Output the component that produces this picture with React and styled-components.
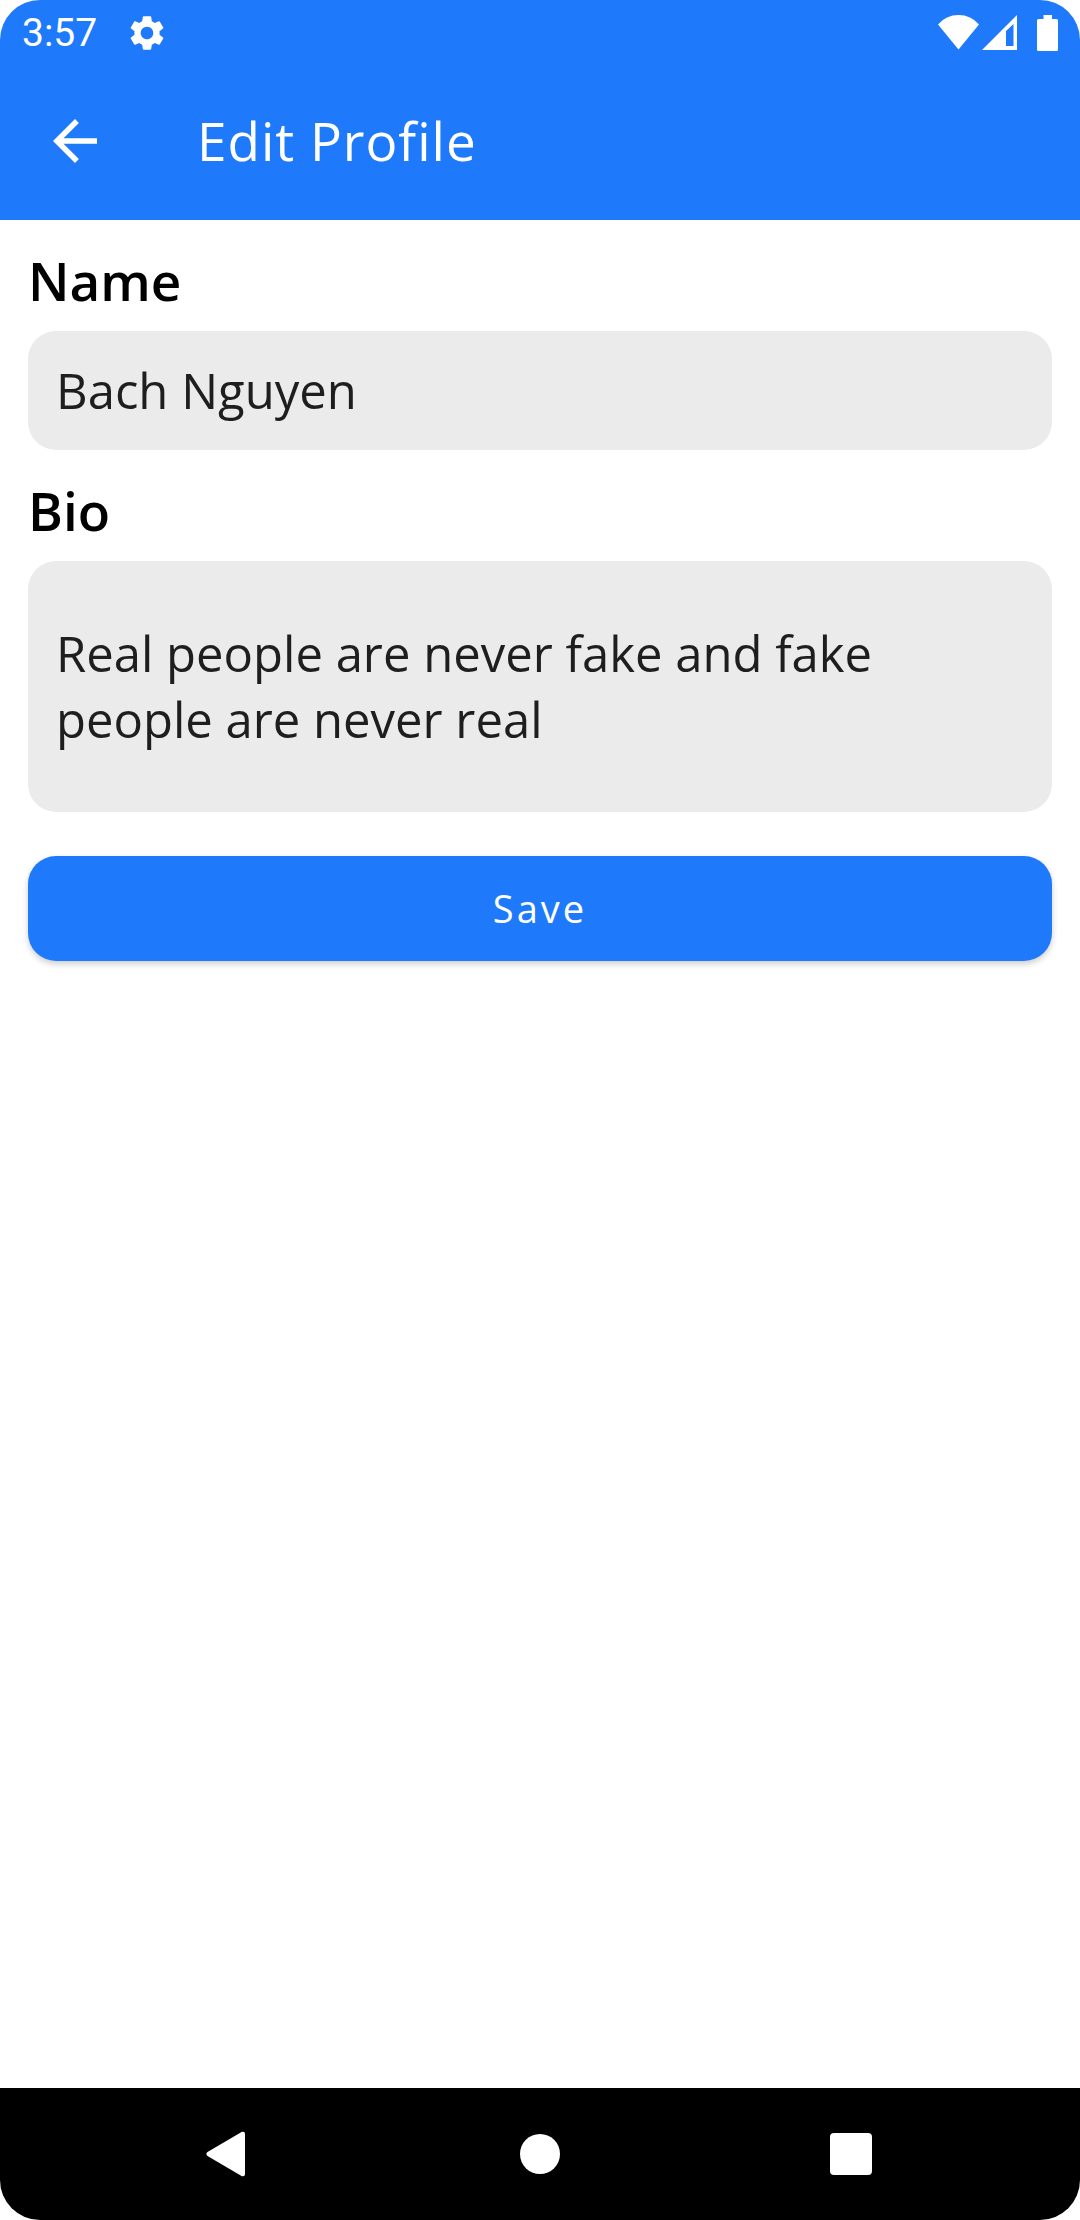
import React from "react";
import styled, { createGlobalStyle } from "styled-components";
import { MdArrowBack, MdSettings } from "react-icons/md";

const BLUE = "#1e7afa";

const GlobalStyle = createGlobalStyle`
  *, *::before, *::after { box-sizing: border-box; }
  body { margin: 0; background: #fff; }
  button, input, textarea { font: inherit; border: 0; outline: 0; margin: 0; }
`;

const Screen = styled.div`
  display: flex;
  flex-direction: column;
  min-height: 100vh;
  overflow: hidden;
  border-radius: 40px;
  background: #fff;
  font-family: "Open Sans", "Noto Sans", sans-serif;
`;

const Header = styled.header`
  background: ${BLUE};
  color: #fff;
`;

const StatusBar = styled.div`
  display: flex;
  align-items: center;
  justify-content: space-between;
  height: 66px;
  padding: 0 22px;
`;

const StatusGroup = styled.div`
  display: flex;
  align-items: center;
  gap: 29px;
`;

const Clock = styled.time`
  font-family: Roboto, sans-serif;
  font-size: 39px;
  line-height: 46px;
`;

const Toolbar = styled.div`
  display: flex;
  align-items: center;
  gap: 89px;
  height: 154px;
  padding: 0 42px 4px;
`;

const BackButton = styled.button`
  display: flex;
  padding: 0;
  background: none;
  color: inherit;
`;

const Title = styled.h1`
  margin: 0;
  font-size: 53px;
  font-weight: 400;
  line-height: 76px;
  letter-spacing: 1px;
`;

const Form = styled.form`
  display: flex;
  flex: 1;
  flex-direction: column;
  padding: 0 28px;
`;

const Label = styled.label`
  margin: 23px 0 12px;
  color: #000;
  font-size: 53px;
  font-weight: 600;
  line-height: 76px;
`;

const TextInput = styled.input`
  width: 100%;
  height: 119px;
  padding: 0 28px 2px;
  border-radius: 28px;
  background: #ebebeb;
  color: #1e1e1e;
  font-size: 49px;
`;

const TextArea = styled.textarea`
  display: block;
  width: 100%;
  height: 251px;
  padding: 59px 28px;
  border-radius: 28px;
  background: #ebebeb;
  color: #1e1e1e;
  font-size: 49px;
  line-height: 66px;
  resize: none;
  overflow: hidden;
`;

const SaveButton = styled.button`
  height: 105px;
  margin-top: 44px;
  padding: 0 0 2px;
  border-radius: 28px;
  background: ${BLUE};
  box-shadow: 0 3px 6px rgba(0, 0, 0, 0.2);
  color: #fff;
  font-size: 38px;
  letter-spacing: 3px;
`;

const NavBar = styled.nav`
  display: grid;
  grid-template-columns: repeat(3, 1fr);
  height: 132px;
  padding: 0 74px;
  background: #000;
`;

const NavButton = styled.button`
  display: flex;
  align-items: center;
  justify-content: center;
  padding: 0;
  background: none;
  color: #fff;
`;

const StatusIcons = () => (
  <svg width="120" height="36" viewBox="0 0 120 36" fill="currentColor" aria-hidden="true">
    <path d="M0 9.5Q8 0 20.5 0T41 9.500L20.500 34.500Z" />
    <path fillRule="evenodd" d="M44 35L79 0V35ZM68 16V31H75.500V9Z" />
    <path d="M105.500 0H114V4H118.500Q120 4 120 5.500V34.500Q120 36 118.500 36H100.500Q99 36 99 34.500V5.500Q99 4 100.500 4H105.500Z" />
  </svg>
);

export default function App() {
  return (
    <Screen>
      <GlobalStyle />
      <Header>
        <StatusBar>
          <StatusGroup>
            <Clock>3:57</Clock>
            <MdSettings size={42} aria-hidden="true" />
          </StatusGroup>
          <StatusIcons />
        </StatusBar>
        <Toolbar>
          <BackButton type="button" aria-label="Back">
            <MdArrowBack size={66} />
          </BackButton>
          <Title>Edit Profile</Title>
        </Toolbar>
      </Header>
      <Form onSubmit={(event) => event.preventDefault()}>
        <Label htmlFor="name">Name</Label>
        <TextInput id="name" type="text" defaultValue="Bach Nguyen" />
        <Label htmlFor="bio">Bio</Label>
        <TextArea
          id="bio"
          spellCheck={false}
          defaultValue="Real people are never fake and fake people are never real"
        />
        <SaveButton type="submit">Save</SaveButton>
      </Form>
      <NavBar aria-label="System">
        <NavButton type="button" aria-label="Back">
          <svg width="46" height="46" viewBox="0 0 46 46" fill="currentColor">
            <path d="M1.500 21L36 .8Q39 0 39 3V43Q39 46 36 45.200L1.500 25Q-.8 23 1.500 21Z" />
          </svg>
        </NavButton>
        <NavButton type="button" aria-label="Home">
          <svg width="42" height="42" viewBox="0 0 42 42" fill="currentColor">
            <circle cx="21" cy="21" r="20" />
          </svg>
        </NavButton>
        <NavButton type="button" aria-label="Recent apps">
          <svg width="42" height="42" viewBox="0 0 42 42" fill="currentColor">
            <rect width="42" height="42" rx="4" />
          </svg>
        </NavButton>
      </NavBar>
    </Screen>
  );
}
